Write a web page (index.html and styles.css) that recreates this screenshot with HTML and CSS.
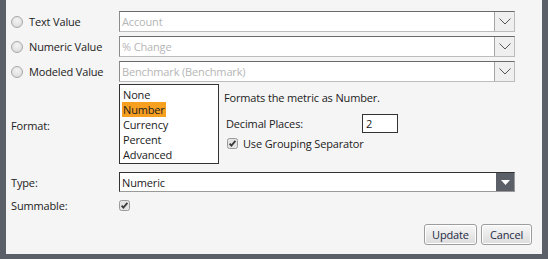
FILE: index.html
```html
<!DOCTYPE html>
<html>
<head>
<meta charset="utf-8">
<link rel="stylesheet" href="styles.css">
</head>
<body>
<div class="panel">
  <div class="row src-row">
    <label class="lbl radio-lbl"><span class="radio"></span>Text Value</label>
    <div class="select">
      <span class="ph">Account</span>
      <span class="dd"><svg width="12" height="7" viewBox="0 0 12 7"><path d="M0.5 0.5 L6 6 L11.5 0.5" fill="none" stroke="#555" stroke-width="1"/></svg></span>
    </div>
  </div>
  <div class="row src-row">
    <label class="lbl radio-lbl"><span class="radio"></span>Numeric Value</label>
    <div class="select">
      <span class="ph">% Change</span>
      <span class="dd"><svg width="12" height="7" viewBox="0 0 12 7"><path d="M0.5 0.5 L6 6 L11.5 0.5" fill="none" stroke="#555" stroke-width="1"/></svg></span>
    </div>
  </div>
  <div class="row src-row">
    <label class="lbl radio-lbl"><span class="radio"></span>Modeled Value</label>
    <div class="select">
      <span class="ph">Benchmark (Benchmark)</span>
      <span class="dd"><svg width="12" height="7" viewBox="0 0 12 7"><path d="M0.5 0.5 L6 6 L11.5 0.5" fill="none" stroke="#555" stroke-width="1"/></svg></span>
    </div>
  </div>
  <div class="row format-row">
    <div class="lbl format-lbl">Format:</div>
    <ul class="listbox">
      <li>None</li>
      <li><span class="sel">Number</span></li>
      <li>Currency</li>
      <li>Percent</li>
      <li>Advanced</li>
    </ul>
    <div class="format-opts">
      <div class="desc">Formats the metric as Number.</div>
      <div class="dec-row">
        <span>Decimal Places:</span>
        <span class="num-input">2</span>
      </div>
      <div class="chk-row">
        <span class="chk"><svg width="11" height="11" viewBox="0 0 11 11"><rect x="0.5" y="0.5" width="10" height="10" rx="2" fill="#e4e4e4" stroke="#9a9a9a"/><path d="M2.6 5.6 L4.4 7.6 L8.4 2.8" fill="none" stroke="#3a3a3a" stroke-width="1.8"/></svg></span>
        <span>Use Grouping Separator</span>
      </div>
    </div>
  </div>
  <div class="row type-row">
    <div class="lbl">Type:</div>
    <div class="select dark">
      <span class="val">Numeric</span>
      <span class="dd dark-dd"><svg width="9" height="5" viewBox="0 0 9 5"><path d="M0 0 L9 0 L4.5 5 Z" fill="#fff"/></svg></span>
    </div>
  </div>
  <div class="row sum-row">
    <div class="lbl">Summable:</div>
    <span class="chk"><svg width="11" height="11" viewBox="0 0 11 11"><rect x="0.5" y="0.5" width="10" height="10" rx="2" fill="#e4e4e4" stroke="#9a9a9a"/><path d="M2.6 5.6 L4.4 7.6 L8.4 2.8" fill="none" stroke="#3a3a3a" stroke-width="1.8"/></svg></span>
  </div>
  <div class="actions">
    <button class="btn">Update</button>
    <button class="btn">Cancel</button>
  </div>
</div>
</body>
</html>
```
FILE: styles.css
```css
html, body {
  margin: 0;
  padding: 0;
  background: #5b6068;
  height: 259px;
  overflow: hidden;
}
body {
  font-family: "Open Sans", "DejaVu Sans", sans-serif;
  font-size: 11px;
  letter-spacing: -0.15px;
  color: #222;
}
.panel {
  margin: 0 6px 0 6px;
  height: 254px;
  background: #f5f5f5;
  padding: 11px 27px 0 5px;
  box-sizing: border-box;
  position: relative;
}
.row {
  display: flex;
  align-items: center;
}
.lbl {
  width: 108px;
  flex: none;
  color: #222;
}
.src-row {
  height: 21px;
  margin-bottom: 4px;
}
.src-row:nth-child(3) {
  margin-bottom: 2px;
}
.radio-lbl {
  display: flex;
  align-items: center;
}
.radio {
  width: 10px;
  height: 10px;
  border-radius: 50%;
  border: 1px solid #a8a8a8;
  background: radial-gradient(circle at 50% 35%, #f4f4f4, #d6d6d6);
  margin-right: 6px;
  flex: none;
}
.select {
  flex: none;
  width: 396px;
  height: 21px;
  box-sizing: border-box;
  background: #fff;
  border: 1px solid;
  border-color: #6a6a6a #bcbcbc #bcbcbc #8c8c8c;
  display: flex;
  align-items: center;
  justify-content: space-between;
}
.ph {
  color: #b5b5b5;
  padding-left: 2px;
}
.dd {
  width: 19px;
  height: 100%;
  background: #efefef;
  border-left: 1px solid #a5a5a5;
  display: flex;
  align-items: center;
  justify-content: center;
}
.format-row {
  align-items: flex-start;
  height: 80px;
}
.format-lbl {
  align-self: center;
  padding-top: 3px;
}
.listbox {
  list-style: none;
  margin: 0;
  padding: 2px 0 0 3px;
  width: 100px;
  height: 80px;
  box-sizing: border-box;
  border: 1px solid #333;
  background: #fff;
  flex: none;
}
.listbox li {
  height: 15px;
  line-height: 15px;
}
.sel {
  background: #f79f1f;
  display: inline-block;
  padding-right: 1px;
  margin-left: -1px;
  padding-left: 1px;
}
.format-opts {
  padding-left: 5px;
  padding-top: 6px;
}
.desc {
  height: 16px;
}
.dec-row {
  display: flex;
  align-items: center;
  margin-top: 8px;
  padding-left: 2px;
}
.dec-row span:first-child {
  width: 136px;
}
.num-input {
  width: 36px;
  height: 19px;
  box-sizing: border-box;
  border: 1px solid #333;
  background: #fff;
  padding-left: 3px;
  line-height: 17px;
}
.chk-row {
  display: flex;
  align-items: center;
  margin-top: 3px;
  padding-left: 3px;
}
.chk {
  width: 11px;
  height: 11px;
  display: inline-flex;
  margin-right: 5px;
}
.type-row {
  margin-top: 8px;
}
.select.dark {
  height: 20px;
  border-color: #333 #9a9a9a #9a9a9a #333;
}
.val {
  padding-left: 2px;
}
.dark-dd {
  background: #5b6068;
  border-left: none;
  width: 18px;
}
.sum-row {
  margin-top: 7px;
  height: 12px;
}
.actions {
  position: absolute;
  right: 10px;
  top: 224px;
  display: flex;
  gap: 4px;
}
.btn {
  font-family: inherit;
  font-size: 11px;
  letter-spacing: -0.15px;
  color: #1e2a44;
  height: 21px;
  padding: 0 4px;
  border: 1px solid #9d9d9d;
  border-radius: 3px;
  background: linear-gradient(#f7f7f7, #dcdcdc);
  box-shadow: inset 0 0 0 1px #fff;
}
.btn:first-child { width: 53px; }
.btn:last-child { width: 51px; }
```
